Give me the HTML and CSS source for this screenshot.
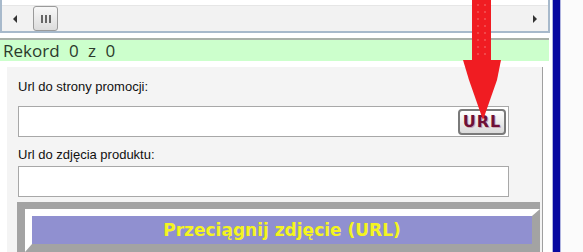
FILE: index.html
```html
<!DOCTYPE html>
<html lang="pl">
<head>
    <meta charset="UTF-8">
    <title>Rekord</title>
    <link rel="stylesheet" href="styles.css">
</head>
<body>
    <div class="screen">
        <div class="main">
            <!-- grid with horizontal scrollbar -->
            <div class="grid">
                <div class="scrollbar">
                    <span class="arrow-left"></span>
                    <span class="thumb"><i></i><i></i><i></i></span>
                    <span class="track"></span>
                    <span class="arrow-right"></span>
                </div>
            </div>

            <div class="status">Rekord 0 z 0</div>

            <div class="panel">
                <label class="caption first" for="promoUrl">Url do strony promocji:</label>
                <div class="field">
                    <input type="text" id="promoUrl">
                    <button class="url-btn" type="button">URL</button>
                </div>

                <label class="caption second" for="photoUrl">Url do zdjęcia produktu:</label>
                <div class="field">
                    <input type="text" id="photoUrl">
                </div>

                <div class="drop-frame">
                    <div class="drop-bar">Przeciągnij zdjęcie (URL)</div>
                </div>
            </div>
        </div>

        <div class="divider"></div>
        <div class="side"></div>

        <!-- red pointer drawn over the form -->
        <svg class="pointer" width="45" height="122" viewBox="0 0 45 122">
            <rect x="12" y="0" width="19" height="61" fill="#f01c22"/>
            <polygon points="3,60 41,60 37,80 23,120 9,80" fill="#f01c22"/>
            <line x1="18" y1="4" x2="18" y2="56" stroke="#f47070" stroke-width="1" stroke-dasharray="2 5"/>
            <line x1="25" y1="4" x2="25" y2="56" stroke="#f47070" stroke-width="1" stroke-dasharray="2 5"/>
        </svg>
    </div>
</body>
</html>
```

FILE: styles.css
```css
body {
    margin: 0;
    background: #fff;
    font-family: "Liberation Sans", Arial, sans-serif;
    color: #222;
}

.screen {
    position: relative;
    display: flex;
    width: 583px;
    height: 252px;
    overflow: hidden;
}

.main {
    width: 551px;
    display: flex;
    flex-direction: column;
}

/* grid + scrollbar */
.grid {
    width: 546px;
    height: 32px;
    border-left: 2px solid #a7b9cb;
    border-right: 2px solid #a7b9cb;
    border-bottom: 2px solid #a7b9cb;
    display: flex;
    flex-direction: column;
    justify-content: flex-end;
    background: #fff;
}

.scrollbar {
    height: 25px;
    background: #f2f2f2;
    border-top: 1px solid #e6e6e6;
    display: flex;
    align-items: center;
}

.arrow-left {
    width: 0;
    height: 0;
    margin-left: 11px;
    border-top: 4px solid transparent;
    border-bottom: 4px solid transparent;
    border-right: 4px solid #333;
}

.thumb {
    width: 23px;
    height: 23px;
    margin-left: 16px;
    border: 1px solid #9a9a9a;
    border-radius: 3px;
    background: linear-gradient(#f8f8f8, #dcdcdc);
    display: flex;
    justify-content: center;
    align-items: center;
    gap: 2px;
}

.thumb i {
    width: 2px;
    height: 8px;
    background: #666;
}

.track {
    flex: 1;
}

.arrow-right {
    width: 0;
    height: 0;
    margin-right: 11px;
    border-top: 4px solid transparent;
    border-bottom: 4px solid transparent;
    border-left: 4px solid #333;
}

/* record counter */
.status {
    margin-top: 5px;
    width: 549px;
    height: 23px;
    border-top: 2px solid #a9b1a9;
    background: #ccffcc;
    font-family: "Open Sans", sans-serif;
    font-size: 17px;
    line-height: 21px;
    padding-left: 3px;
    box-sizing: border-box;
    word-spacing: 5px;
    color: #2b3a2b;
}

/* form panel */
.panel {
    margin: 6px 0 0 7px;
    width: 536px;
    flex: 1;
    background: #f4f4f4;
    border-right: 1px solid #a0a0a0;
    box-sizing: border-box;
    padding: 12px 0 0 11px;
    display: flex;
    flex-direction: column;
}

.caption {
    font-size: 13px;
    line-height: 16px;
    color: #111;
}

.caption.first + .field {
    margin-top: 11px;
}

.caption.second {
    margin-top: 10px;
}

.caption.second + .field {
    margin-top: 3px;
}

.field {
    width: 491px;
    height: 31px;
    box-sizing: border-box;
    border: 1px solid #a8a8a8;
    background: #fff;
    display: flex;
    align-items: center;
    padding-right: 2px;
}

.field input {
    flex: 1;
    height: 100%;
    border: none;
    outline: none;
    background: transparent;
    padding: 0 4px;
}

.url-btn {
    width: 48px;
    height: 26px;
    padding: 0;
    border: 2px solid #7a7a7a;
    border-radius: 4px;
    background: linear-gradient(#ffffff, #dadada);
    color: #6e1038;
    font-family: "DejaVu Sans", sans-serif;
    font-weight: bold;
    font-size: 16px;
    letter-spacing: 1px;
    text-shadow: 1px 1px 0 #c9a9b6;
}

/* drag target */
.drop-frame {
    margin: 5px 0 0 -1px;
    width: 523px;
    flex: 1;
    background: #a3a3a3;
    padding: 7px 0 0 8px;
    box-sizing: border-box;
    display: flex;
    align-items: flex-start;
}

.drop-bar {
    flex: 1;
    height: 28px;
    border-top: 7px solid #fff;
    border-left: 7px solid #fff;
    border-right: 8px solid #a3a3a3;
    border-bottom: 8px solid #a3a3a3;
    background: #9090d0;
    color: #f4f420;
    font-family: "DejaVu Sans", sans-serif;
    font-weight: bold;
    font-size: 17px;
    line-height: 28px;
    text-align: center;
}

/* right side */
.divider {
    margin-left: 1px;
    width: 7px;
    background: #0808a0;
    border-left: 1px solid #b0b4e0;
    border-right: 1px solid #b0b4e0;
}

.side {
    flex: 1;
    background: #fbfbfb;
}

.pointer {
    position: absolute;
    left: 460px;
    top: 0;
}
```
